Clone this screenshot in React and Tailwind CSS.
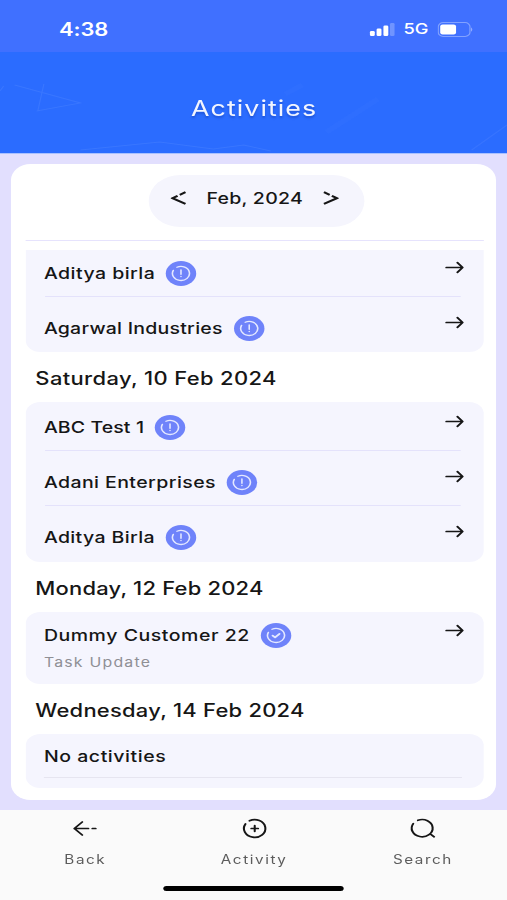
import clsx from "clsx";

const days = [
  {
    title: null,
    items: [
      { name: "Aditya birla", status: "pending", track: "tracking-[0.38px]" },
      { name: "Agarwal Industries", status: "pending", track: "tracking-[0.2px]" },
    ],
  },
  {
    title: "Saturday, 10 Feb 2024",
    track: "tracking-[0.3px]",
    items: [
      { name: "ABC Test 1", status: "pending", track: "tracking-[0.08px]" },
      { name: "Adani Enterprises", status: "pending", track: "tracking-[0.34px]" },
      { name: "Aditya Birla", status: "pending", track: "tracking-[0.3px]" },
    ],
  },
  {
    title: "Monday, 12 Feb 2024",
    track: "tracking-[0.17px]",
    items: [
      {
        name: "Dummy Customer 22",
        note: "Task Update",
        status: "done",
        track: "tracking-[0.44px]",
      },
    ],
  },
  { title: "Wednesday, 14 Feb 2024", track: "tracking-[0.2px]", items: [] },
];

const StatusBadge = ({ status }) => (
  <span className="w-[25px] h-[25px] shrink-0 rounded-full bg-[#6f83fa] flex items-center justify-center">
    <svg
      width="17"
      height="17"
      viewBox="0 0 17 17"
      fill="none"
      stroke="#e4e8ff"
      strokeWidth="1.3"
      strokeLinecap="round"
      strokeLinejoin="round"
    >
      <path d="M5.2 2.3 A7 7 0 1 1 2.2 5.4" />
      {status === "done" ? (
        <path d="M5.7 8.6 L7.7 10.4 L11.3 6.8" strokeWidth="1.7" />
      ) : (
        <path d="M8.5 5 V9.3 M8.5 11.4 V11.6" />
      )}
    </svg>
  </span>
);

const ArrowRight = ({ className }) => (
  <svg
    className={clsx("shrink-0", className)}
    width="16"
    height="13"
    viewBox="0 0 16 13"
    fill="none"
    stroke="#161616"
    strokeWidth="1.7"
    strokeLinecap="round"
    strokeLinejoin="round"
  >
    <path d="M1.2 6.5 H14 M10.3 1.6 L14.6 6.5 L10.3 11.4" />
  </svg>
);

const ActivityRow = ({ item, last }) => (
  <div
    className={clsx(
      "flex justify-between pl-[15.5px] pr-[15.5px]",
      item.note ? "h-[72px]" : last ? "h-[50px]" : "h-[55px]"
    )}
  >
    <div className="relative flex-1">
      <div
        className={clsx(
          "flex items-center gap-[9px]",
          item.note ? "h-[47px]" : "h-[50px]"
        )}
      >
        <p
          className={clsx(
            "text-base font-medium whitespace-nowrap text-[#161616] -mt-px",
            item.track
          )}
        >
          {item.name}
        </p>
        <StatusBadge status={item.status} />
      </div>
      {item.note && (
        <p className="-mt-[6px] text-[13px] leading-[18px] tracking-[1px] text-[#8f8f95]">
          {item.note}
        </p>
      )}
      {!last && (
        <span className="absolute left-[0.5px] -right-[13px] top-[48px] h-px bg-[#e4e2fb]" />
      )}
    </div>
    <ArrowRight className={item.note ? "mt-3" : "mt-[13px]"} />
  </div>
);

const StatusBar = () => (
  <div className="h-[52px] bg-[#4070ff] flex items-center justify-between pl-[48.5px] pr-[27.5px] pt-[6px] text-white">
    <span className="text-[18px] font-semibold tracking-[-0.1px]">4:38</span>
    <div className="flex items-center">
      <svg width="21" height="13" viewBox="0 0 21 13" fill="#fff">
        <rect x="0.5" y="8" width="4" height="5" rx="1.2" />
        <rect x="6" y="5.5" width="4" height="7.5" rx="1.2" />
        <rect x="11.6" y="2.5" width="4" height="10.5" rx="1.2" />
        <rect x="17" y="0" width="3.8" height="13" rx="1.2" opacity="0.25" />
      </svg>
      <span className="ml-[7px] text-[15px] font-medium">5G</span>
      <svg className="ml-[7px]" width="30" height="15" viewBox="0 0 30 15" fill="none">
        <rect x="0.6" y="0.6" width="26" height="13.8" rx="4" stroke="#fff" strokeOpacity="0.35" />
        <rect x="2.2" y="2.4" width="13" height="10" rx="2" fill="#fff" />
        <path d="M27.6 5.2 q1.8 2.3 0 4.6z" fill="#fff" fillOpacity="0.5" />
      </svg>
    </div>
  </div>
);

const Header = () => (
  <div className="relative h-[102px] bg-[#2b6cff] border-b border-[#a9c1ff] flex items-center justify-center">
    <svg
      className="absolute inset-0"
      width="416"
      height="101"
      viewBox="0 0 416 101"
      fill="none"
      stroke="#5b8dff"
      strokeOpacity="0.3"
    >
      <path d="M12 33 L66 51 L30 59 M36 32 L31 59 M0 39 L3 34" />
      <path d="M66 98 L131 90 L175 97 L200 93 L222 99" />
      <path d="M268 80 L310 47 M234 42 L248 33" strokeOpacity="0.08" strokeWidth="5" />
      <path d="M387 98 L416 73" strokeOpacity="0.25" />
    </svg>
    <h1 className="relative mt-[11px] ml-px text-[22px] leading-7 tracking-[0.85px] text-[#f2f5ff] [text-shadow:0_2px_2px_rgba(0,30,120,0.3)]">
      Activities
    </h1>
  </div>
);

const MonthPicker = () => (
  <div className="ml-[101px] w-[177px] h-[52px] shrink-0 rounded-full bg-[#f5f5fd] flex items-center justify-between pl-[18px] pr-5 pb-[6px]">
    <svg width="13" height="14" viewBox="0 0 13 14" fill="none" stroke="#161616" strokeWidth="2">
      <path d="M12.2 1.2 L7.5 3.8 M5.7 4.8 L1.5 7.2 L12.2 12.8" />
    </svg>
    <span className="text-base font-medium tracking-[0.2px] whitespace-nowrap text-[#161616]">
      Feb, 2024
    </span>
    <svg width="13" height="14" viewBox="0 0 13 14" fill="none" stroke="#161616" strokeWidth="2">
      <path d="M0.8 1.2 L5.5 3.8 M7.3 4.8 L11.5 7.2 L0.8 12.8" />
    </svg>
  </div>
);

const BottomNav = () => (
  <div className="h-[90px] bg-[#fafafa]">
    <div className="flex justify-between pl-[20px] pr-[19px] pt-[6px] text-[12.5px] leading-[18px] tracking-[1.3px] text-[#5c5c5c]">
      <div className="w-[100px] flex flex-col items-center gap-[10px]">
        <svg width="24" height="25" viewBox="0 0 24 25" fill="none" stroke="#161616" strokeWidth="1.7" strokeLinecap="round" strokeLinejoin="round">
          <path d="M9.5 6 L3 12.5 L9.5 19 M3 12.5 H14.5 M17.8 12.5 H20.5" />
        </svg>
        <span>Back</span>
      </div>
      <div className="w-[100px] flex flex-col items-center gap-[10px]">
        <svg width="24" height="25" viewBox="0 0 24 25" fill="none" stroke="#161616" strokeWidth="1.7" strokeLinecap="round">
          <path d="M7.7 4.8 A8.8 8.8 0 1 1 4.4 8 M9.2 12.5 H14.8 M12 9.7 V15.3" />
        </svg>
        <span>Activity</span>
      </div>
      <div className="w-[100px] flex flex-col items-center gap-[10px]">
        <svg width="24" height="25" viewBox="0 0 24 25" fill="none" stroke="#161616" strokeWidth="1.7" strokeLinecap="round">
          <path d="M7.9 4.3 A8.6 8.6 0 1 1 4.1 7.6 M18.8 18.6 L21.2 20.8" />
        </svg>
        <span>Search</span>
      </div>
    </div>
    <div className="mx-auto mt-[17px] w-[148px] h-[5px] rounded-full bg-black" />
  </div>
);

const App = () => {
  return (
    <div className="w-[507px] h-[900px] overflow-hidden bg-[#e2dffe]">
      {/* Narrow phone layout widened to fill the window */}
      <div className="w-[416px] h-[900px] origin-left scale-x-[1.21875] flex flex-col font-['Inter',sans-serif]">
        <StatusBar />
        <Header />

        {/* Activity list */}
        <div className="h-[656px] px-[9px] pt-[10px] pb-[10px]">
          <div className="h-full rounded-2xl bg-white pl-[11.5px] pr-[10.5px] pt-[11px] overflow-hidden flex flex-col">
            <MonthPicker />
            <div className="mt-[13px] h-px shrink-0 bg-[#e6e3fd]" />
            <div className="mt-[9px] flex-1 overflow-hidden">
              <div className="-mt-[2px]">
                {days.map((day, i) => (
                  <div key={i}>
                    {day.title && (
                      <h2
                        className={clsx(
                          "h-[50px] pl-[8.5px] pt-[13px] text-lg leading-7 font-medium whitespace-nowrap text-[#161616]",
                          day.track
                        )}
                      >
                        {day.title}
                      </h2>
                    )}
                    <div
                      className={clsx(
                        "bg-[#f5f5fe]",
                        day.title ? "rounded-xl" : "rounded-b-xl h-[104px]"
                      )}
                    >
                      {day.items.length > 0 ? (
                        day.items.map((item, n) => (
                          <ActivityRow
                            key={item.name}
                            item={item}
                            last={n === day.items.length - 1}
                          />
                        ))
                      ) : (
                        <div className="h-[54px] pl-[15.5px] pr-[18px]">
                          <p className="h-[44px] pt-[10px] text-base leading-6 font-medium tracking-[0.45px] text-[#161616] border-b border-[#e6e5f0]">
                            No activities
                          </p>
                        </div>
                      )}
                    </div>
                  </div>
                ))}
              </div>
            </div>
          </div>
        </div>

        <BottomNav />
      </div>
    </div>
  );
};

export default App;
